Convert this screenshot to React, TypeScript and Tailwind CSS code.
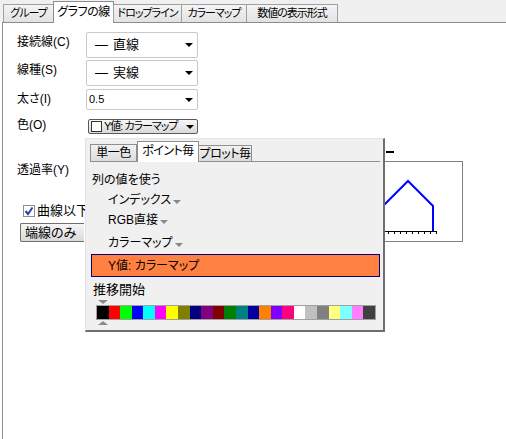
import React from 'react';

const TABS = [
  { label: 'グループ', w: 'w-[51px]' },
  { label: 'グラフの線', w: 'w-[61px]', active: true },
  { label: 'ドロップライン', w: 'w-[69px]' },
  { label: 'カラーマップ', w: 'w-[66px]' },
  { label: '数値の表示形式', w: 'w-[92px]' },
];

const PALETTE = [
  'bg-[#000000]', 'bg-[#ff0000]', 'bg-[#00ff00]', 'bg-[#0000ff]', 'bg-[#00ffff]', 'bg-[#ff00ff]',
  'bg-[#ffff00]', 'bg-[#808000]', 'bg-[#000080]', 'bg-[#800080]', 'bg-[#800000]', 'bg-[#008000]',
  'bg-[#008080]', 'bg-[#0000a0]', 'bg-[#ff8000]', 'bg-[#8000ff]', 'bg-[#ff0080]', 'bg-[#ffffff]',
  'bg-[#c0c0c0]', 'bg-[#808080]', 'bg-[#ffff80]', 'bg-[#80ffff]', 'bg-[#ff80ff]', 'bg-[#404040]',
];

const DownArrow = ({ gray }: { gray?: boolean }) =>
  gray ? (
    <span className="inline-block w-0 h-0 border-l-[4px] border-r-[4px] border-t-[4px] border-l-transparent border-r-transparent border-t-[#8a8a8a] ml-[2px] mt-[3px]" />
  ) : (
    <span className="inline-block w-0 h-0 border-l-[4px] border-r-[4px] border-t-[4px] border-l-transparent border-r-transparent border-t-black shrink-0" />
  );

const Select = ({ children, h, big }: { children: React.ReactNode; h: string; big?: boolean }) => (
  <div className={`w-[112px] ${h} border border-[#c9c9c9] rounded-[2px] bg-white flex items-center justify-between pr-[4px] ${big ? 'pl-[8px] text-[13px]' : 'pl-[2px] text-[11px]'}`}>
    <span className="flex items-center whitespace-nowrap">{children}</span>
    <DownArrow />
  </div>
);

const Preview = () => (
  <div className="w-[80px] h-[81px] border border-[#808080] bg-white">
    <svg width="78" height="79" viewBox="0 0 78 79">
      <polyline points="0,43 24,19 49,44 49,69" fill="none" stroke="#0000ff" strokeWidth="2" />
      <line x1="0" y1="69.5" x2="53" y2="69.5" stroke="#000" strokeWidth="1" />
      {[4, 10, 16, 22, 28, 34, 40, 46, 52].map((x) => (
        <line key={x} x1={x + 0.5} y1="69" x2={x + 0.5} y2="72" stroke="#000" strokeWidth="1" />
      ))}
    </svg>
  </div>
);

const ColorPopup = () => (
  <div className="absolute left-[85px] top-[138px] w-[300px] h-[194px] bg-[#f0f0f0] border-l border-t border-[#e3e3e3] border-r-2 border-b-2 border-r-[#6f6f6f] border-b-[#6f6f6f] z-20 text-[12px] text-black">
    <div className="mx-[4px] mr-[3px] mt-[2px] h-[21px] border-b border-[#8e8f8f] flex items-end whitespace-nowrap tracking-[-0.5px]">
      <div className="w-[47px] h-[17px] border border-b-0 border-[#8e8f8f] bg-gradient-to-b from-[#f2f2f2] to-[#dcdcdc] flex items-center justify-center leading-none">
        単一色
      </div>
      <div className="w-[62px] h-[21px] border border-b-0 border-[#8e8f8f] bg-white -mb-px relative flex items-center justify-center leading-none pb-[2px]">
        ポイント毎
      </div>
      <div className="w-[53px] h-[16px] border border-b-0 border-l-0 border-[#8e8f8f] bg-gradient-to-b from-[#f2f2f2] to-[#dcdcdc] flex items-center justify-center leading-none">
        プロット毎
      </div>
    </div>
    <div className="pl-[6px] mt-[11px] leading-[14px]">列の値を使う</div>
    <div className="pl-[22px] mt-[6px] leading-[14px] flex items-center">インデックス<DownArrow gray /></div>
    <div className="pl-[22px] mt-[6px] leading-[14px] flex items-center">RGB直接<DownArrow gray /></div>
    <div className="pl-[22px] mt-[9px] leading-[14px] flex items-center">カラーマップ<DownArrow gray /></div>
    <div className="ml-[5px] mr-[3px] mt-[4px] h-[23px] bg-[#ff8040] border border-[#000080] pl-[16px] flex items-center">
      Y値: カラーマップ
    </div>
    <div className="pl-[7px] mt-[6px] leading-[14px] text-[13px]">推移開始</div>
    <div className="ml-[12px] mt-[3px] w-0 h-0 border-l-[5px] border-r-[5px] border-t-[4px] border-l-transparent border-r-transparent border-t-[#8a8a8a]" />
    <div className="ml-[10px] mt-[1px] w-[280px] h-[15px] border border-[#a0a0a0] flex">
      {PALETTE.map((c, i) => (
        <div key={i} className={`flex-1 h-full ${c}`} />
      ))}
    </div>
    <div className="ml-[12px] mt-[1px] w-0 h-0 border-l-[5px] border-r-[5px] border-b-[4px] border-l-transparent border-r-transparent border-b-[#8a8a8a]" />
  </div>
);

export default function App() {
  return (
    <div className="w-[506px] h-[439px] overflow-hidden bg-white relative text-black font-['Liberation_Sans','Noto_Sans_CJK_JP',sans-serif] [font-feature-settings:'palt']">
      <div className="h-[22px] bg-[#f0f0f0] flex items-end pl-[3px] relative z-10 whitespace-nowrap">
        {TABS.map((t) =>
          t.active ? (
            <div
              key={t.label}
              className={`${t.w} h-[22px] -mb-px bg-white border border-b-0 border-[#898c95] text-[12px] tracking-[-0.5px] flex items-start justify-center pt-[4px] leading-none -ml-px`}
            >
              {t.label}
            </div>
          ) : (
            <div
              key={t.label}
              className={`${t.w} h-[18px] bg-gradient-to-b from-[#f4f4f4] to-[#e2e2e2] border border-b-0 border-[#a0a0a0] text-[11px] tracking-[-1px] flex items-center justify-center leading-none -ml-px first:ml-0`}
            >
              {t.label}
            </div>
          )
        )}
      </div>

      <div className="ml-[2px] h-[417px] border-l border-t border-[#898c95] pl-[14px] pt-[9px] text-[12px]">
        <div className="flex h-[26px]">
          <div className="w-[69px] pt-[3px] leading-[14px]">接続線(C)</div>
          <Select h="h-[26px]" big>
            <span className="mr-[5px]">—</span>直線
          </Select>
        </div>
        <div className="flex h-[26px] mt-[2px]">
          <div className="w-[69px] pt-[3px] leading-[14px]">線種(S)</div>
          <Select h="h-[26px]" big>
            <span className="mr-[5px]">—</span>実線
          </Select>
        </div>
        <div className="flex h-[21px] mt-[3px]">
          <div className="w-[69px] pt-[3px] leading-[14px]">太さ(I)</div>
          <Select h="h-[21px]">0.5</Select>
        </div>
        <div className="flex h-[15px] mt-[9px]">
          <div className="w-[69px] -mt-px leading-[14px]">色(O)</div>
          <div className="ml-[2px] w-[110px] h-[15px] border border-[#5a5a5a] rounded-[2px] bg-gradient-to-b from-[#f8f8f8] to-[#d9d9d9] flex items-center pl-[2px] pr-[3px]">
            <span className="w-[11px] h-[11px] border border-[#333] bg-white shrink-0" />
            <span className="ml-[2px] leading-none flex-1 whitespace-nowrap text-[11px] tracking-[-1px]">Y値: カラーマップ</span>
            <DownArrow />
          </div>
        </div>

        <div className="flex mt-[11px]">
          <div className="w-[366px] flex flex-col">
            <div className="mt-[18px] leading-[14px]">透過率(Y)</div>
            <div className="mt-[27px] ml-[6px] h-[13px] flex items-center">
              <span className="w-[12px] h-[12px] border border-[#8f8f8f] bg-white flex items-center justify-center shrink-0">
                <svg width="10" height="10" viewBox="0 0 10 10">
                  <path d="M1.5 5 L4 8 L8.5 1.5" fill="none" stroke="#2346b0" strokeWidth="2" />
                </svg>
              </span>
              <span className="ml-[2px] text-[13px] leading-none whitespace-nowrap">曲線以下の</span>
            </div>
            <div className="mt-[6px] ml-[3px] w-[64px] h-[19px] border border-r-0 border-[#707070] rounded-l-[2px] bg-gradient-to-b from-[#f6f6f6] to-[#dadada] flex items-center pl-[4px] text-[13px] leading-none">
              端線のみ
            </div>
          </div>
          <div className="flex flex-col">
            <div className="mt-[6px] ml-[3px] w-[8px] h-[2px] bg-black" />
            <div className="mt-[8px]">
              <Preview />
            </div>
          </div>
        </div>
      </div>

      <ColorPopup />
    </div>
  );
}
